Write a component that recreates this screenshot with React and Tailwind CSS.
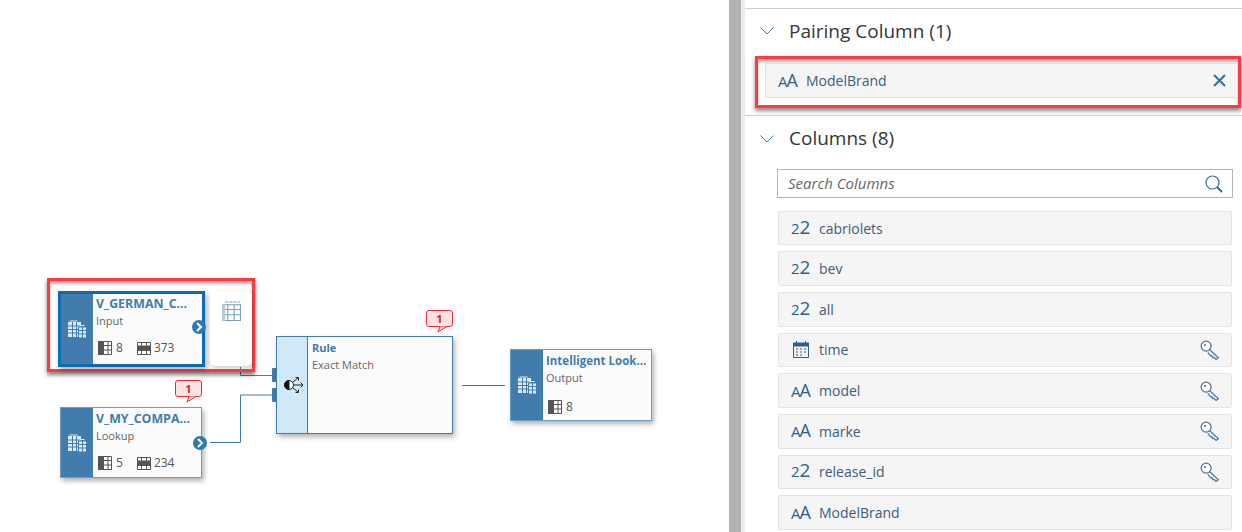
const uiFont = { fontFamily: '"Open Sans", "Noto Sans", sans-serif' };

const columns = [
  { name: 'cabriolets', type: 'num' },
  { name: 'bev', type: 'num' },
  { name: 'all', type: 'num' },
  { name: 'time', type: 'date', isKey: true },
  { name: 'model', type: 'text', isKey: true },
  { name: 'marke', type: 'text', isKey: true },
  { name: 'release_id', type: 'num', isKey: true },
  { name: 'ModelBrand', type: 'text' },
];

// Two buildings, used on the blue strip of each node
const BuildingIcon = () => (
  <svg width="20" height="20" viewBox="0 0 20 20" fill="none" stroke="#427cac" strokeWidth="1">
    <path d="M1 3h13v15H1z" fill="#dfeaf3" stroke="none" />
    <path d="M1 7h13M1 10.5h13M1 14h13M5.5 3v15M9.5 3v15" />
    <path d="M2.5 2h8" stroke="#dfeaf3" />
    <path d="M11.5 8h8v11h-8z" fill="#dfeaf3" />
    <path d="M11.5 11.5h8M11.5 15h8M15.5 8v11" />
    <path d="M12.5 6.5h5" stroke="#dfeaf3" />
  </svg>
);

const ColumnsCountIcon = () => (
  <svg width="14" height="14" viewBox="0 0 14 14" className="shrink-0">
    <path d="M0.5 0.5h13v13h-13z" fill="#fff" stroke="#555" />
    <path d="M0 0h6v14H0z" fill="#555" />
    <path d="M6 4.5h8M6 9h8M10 0v14" stroke="#555" />
  </svg>
);

const RowsCountIcon = () => (
  <svg width="14" height="13" viewBox="0 0 14 13" className="shrink-0">
    <path d="M0.5 0.5h13v12h-13z" fill="#fff" stroke="#555" />
    <path d="M0 3.5h14v5.5H0z" fill="#555" />
    <path d="M4.5 0v3.5M9.5 0v3.5M4.5 9v4M9.5 9v4" stroke="#555" />
  </svg>
);

const ExpandBadge = ({ className }) => (
  <span className={`absolute flex h-[14px] w-[14px] items-center justify-center rounded-full bg-[#2f79b3] ${className}`}>
    <svg width="8" height="10" viewBox="0 0 8 10" fill="none" stroke="#fff" strokeWidth="2">
      <path d="M2 1l4 4-4 4" />
    </svg>
  </span>
);

const Callout = ({ className }) => (
  <div className={`absolute h-[23px] w-[27px] ${className}`}>
    <div className="flex h-[17px] w-full items-center justify-center rounded-[3px] border border-[#ee2b33] bg-[#ffe3e3] text-[11px] leading-none font-bold text-[#d9202a]" style={uiFont}>
      1
    </div>
    <svg width="11" height="7" viewBox="0 0 11 7" className="absolute top-[16px] left-[11px]">
      <path d="M3 0.5L1 6L10 0.5" fill="#ffe3e3" stroke="#ee2b33" />
    </svg>
  </div>
);

const Node = ({ className, title, titleSize, subtitle, cols, rows, selected }) => (
  <div className={`absolute flex bg-[#fbfbfb] shadow-[2px_3px_5px_rgba(0,0,0,0.3)] ${selected ? 'border-[3px] border-[#0a6bb0]' : 'border border-[#6d9cc4]'} ${className}`} style={uiFont}>
    <div className="flex w-[32px] shrink-0 items-center justify-center bg-[#427cac]">
      <BuildingIcon />
    </div>
    <div className={`min-w-0 flex-1 pl-[3px] ${selected ? 'pt-[2px]' : 'pt-[3px]'}`}>
      <div className={`${titleSize} leading-[16px] font-bold whitespace-nowrap text-[#427cac]`}>{title}</div>
      <div className="mt-[1px] text-[11px] leading-[16px] text-[#666]">{subtitle}</div>
      <div className={`flex items-center pl-[2px] text-[12px] leading-[14px] text-[#555] ${rows ? 'mt-[12px]' : 'mt-[14px]'}`}>
        <ColumnsCountIcon />
        <span className="ml-[4px]">{cols}</span>
        {rows && (
          <>
            <span className="ml-[14px]"><RowsCountIcon /></span>
            <span className="ml-[3px]">{rows}</span>
          </>
        )}
      </div>
    </div>
  </div>
);

const Canvas = () => (
  <div className="relative h-[532px] w-[729px] shrink-0 overflow-hidden bg-white">
    {/* connectors */}
    <svg width="729" height="532" className="absolute top-0 left-0" fill="none">
      <path d="M240.5 367v8.5H272" stroke="#427cac" />
      <path d="M210 442.5h30.5v-47.5H272" stroke="#427cac" />
      <path d="M462 385.5h43" stroke="#666" />
    </svg>

    <div className="absolute top-[278px] left-[47px] h-[94px] w-[208px] border-[3px] border-[#ff3b41] shadow-[0_3px_4px_rgba(0,0,0,0.5),inset_0_3px_3px_rgba(0,0,0,0.3)]" />

    <Node className="top-[291px] left-[58px] h-[76px] w-[147px]" title="V_GERMAN_C..." titleSize="text-[12.4px]" subtitle="Input" cols="8" rows="373" selected />
    <ExpandBadge className="top-[320px] left-[192px]" />
    <div className="absolute top-[291px] left-[210px] flex h-[75px] w-[42px] justify-center rounded-[5px] bg-white pt-[10px] shadow-[1px_2px_4px_rgba(0,0,0,0.2)]">
      <svg width="19" height="21" viewBox="0 0 18 20" fill="none" stroke="#7a9cbc">
        <path d="M3 1h14" strokeDasharray="3 1" />
        <path d="M0.5 3.5h17v15h-17z" />
        <path d="M0.5 8h17M0.5 13h17M5.5 3.5v15M11.5 3.5v15" />
        <path d="M0 3h3v16H0z" fill="#b9c9d9" stroke="none" />
      </svg>
    </div>

    <Node className="top-[407px] left-[60px] h-[71px] w-[142px]" title="V_MY_COMPA..." titleSize="text-[12.4px]" subtitle="Lookup" cols="5" rows="234" />
    <ExpandBadge className="top-[436px] left-[193px]" />
    <Callout className="top-[380px] left-[175px]" />

    <div className="absolute top-[368px] left-[272px] h-[14px] w-[5px] rounded-l-[1px] bg-[#427cac]" />
    <div className="absolute top-[388px] left-[272px] h-[14px] w-[5px] rounded-l-[1px] bg-[#427cac]" />
    <div className="absolute top-[336px] left-[276px] flex h-[98px] w-[177px] border border-[#427cac] bg-[#fbfbfb] shadow-[2px_3px_5px_rgba(0,0,0,0.3)]" style={uiFont}>
      <div className="flex w-[31px] shrink-0 items-center justify-center border-r border-[#427cac] bg-[#cfe9f8] pl-[3px]">
        <svg width="22" height="18" viewBox="0 0 22 18" fill="none" stroke="#222">
          <circle cx="6" cy="9" r="4.5" fill="#fff" />
          <path d="M6 4.5a4.5 4.5 0 0 0 0 9z" fill="#111" />
          <path d="M11 9h9M17.5 6.5L20 9l-2.5 2.5M10 6l5-4M12.5 1.5h3v3M10 12l5 4M12.5 16.5h3v-3" />
        </svg>
      </div>
      <div className="pt-[3px] pl-[4px]">
        <div className="text-[11px] leading-[16px] font-bold text-[#427cac]">Rule</div>
        <div className="mt-[1px] text-[11px] leading-[16px] text-[#666]">Exact Match</div>
      </div>
    </div>
    <Callout className="top-[310px] left-[426px]" />

    <Node className="top-[349px] left-[510px] h-[72px] w-[142px]" title="Intelligent Look..." titleSize="text-[11.5px]" subtitle="Output" cols="8" />
  </div>
);

const Chevron = () => (
  <svg width="14" height="8" viewBox="0 0 14 8" fill="none" stroke="#427cac" className="shrink-0">
    <path d="M0.5 0.5L7 7l6.5-6.5" />
  </svg>
);

const TypeIcon = ({ type }) => {
  if (type === 'date') {
    return (
      <svg width="16" height="17" viewBox="0 0 16 17" className="ml-[2px] shrink-0" fill="none" stroke="#2d5f8f">
        <path d="M0.5 2.5h15v14h-15z" />
        <path d="M0 2h16v3H0z" fill="#2d5f8f" />
        <path d="M3.5 0v3M12.5 0v3" />
        <path d="M3 8h2M7 8h2M11 8h2M3 11h2M7 11h2M11 11h2M3 14h2M7 14h2" strokeWidth="1.2" />
      </svg>
    );
  }
  if (type === 'num') {
    return (
      <span className="mt-[-2px] block w-[21px] shrink-0 leading-none whitespace-nowrap text-[#2d5f8f]">
        <span className="text-[15px]">2</span>
        <span className="text-[19px]">2</span>
      </span>
    );
  }
  return (
    <span className="mt-[-2px] block w-[21px] shrink-0 leading-none whitespace-nowrap text-[#2d5f8f]">
      <span className="text-[15px]">A</span>
      <span className="ml-[-1px] text-[18px]">A</span>
    </span>
  );
};

const KeyIcon = () => (
  <svg width="20" height="20" viewBox="0 0 18 18" fill="none" stroke="#55708c" strokeWidth="1.1">
    <circle cx="5.5" cy="5.5" r="4.5" fill="#fff" />
    <circle cx="4.5" cy="4.5" r="1" fill="#427cac" stroke="none" />
    <path d="M8.5 8.5l8 7.5-2 1.5-2-2-1 .5-1-2-1 .2-2.5-3" stroke="#427cac" />
  </svg>
);

const ColumnRow = ({ name, type, isKey }) => (
  <div className="flex h-[34.67px] items-center rounded-[2px] border border-[#e4e4e4] bg-[#f5f5f5] pr-[11px] pl-[12px]">
    <div className="flex w-[28px] shrink-0 items-center"><TypeIcon type={type} /></div>
    <span className="flex-1 text-[14px] text-[#3f5c7c]">{name}</span>
    {isKey && <KeyIcon />}
  </div>
);

const SidePanel = () => (
  <div className="h-[532px] flex-1 overflow-hidden bg-white pt-[8px]" style={uiFont}>
    <div className="h-[107px] border-t border-[#cfcfcf]">
      <div className="flex h-[44px] items-center pl-[15px]">
        <Chevron />
        <span className="ml-[15px] text-[19px] text-[#32363a]">Pairing Column (1)</span>
      </div>
      <div className="relative mt-[3px] ml-[10px] h-[52px] w-[486px] border-[3px] border-[#ff3b41] pt-[4px] pl-[7px] shadow-[0_3px_4px_rgba(0,0,0,0.45),inset_0_3px_3px_rgba(0,0,0,0.3)]">
        <div className="flex h-[35px] items-center border border-[#e0e0e0] bg-[#f5f5f5] pr-[11px] pl-[12px]">
          <div className="w-[28px] shrink-0"><TypeIcon type="text" /></div>
          <span className="flex-1 text-[14px] text-[#3f5c7c]">ModelBrand</span>
          <svg width="13" height="13" viewBox="0 0 13 13" stroke="#2f6ea5" strokeWidth="2">
            <path d="M1 1l11 11M12 1L1 12" />
          </svg>
        </div>
      </div>
    </div>
    <div className="border-t border-[#cfcfcf]">
      <div className="flex h-[45px] items-center pl-[15px]">
        <Chevron />
        <span className="ml-[15px] text-[19px] text-[#32363a]">Columns (8)</span>
      </div>
      <div className="mt-[8px] ml-[32px] flex h-[29px] w-[456px] items-center justify-between border border-[#b5b5b5] pr-[9px] pl-[10px]">
        <span className="text-[15px] text-[#666] italic">Search Columns</span>
        <svg width="18" height="18" viewBox="0 0 18 18" fill="none" stroke="#2f6ea5">
          <circle cx="7.5" cy="7.5" r="6.5" strokeWidth="1.2" />
          <path d="M12 12l5 5" strokeWidth="2" />
        </svg>
      </div>
      <div className="mt-[12.7px] ml-[33px] flex w-[454px] flex-col gap-[6px]">
        {columns.map((column) => (
          <ColumnRow key={column.name} {...column} />
        ))}
      </div>
    </div>
  </div>
);

const App = () => (
  <div className="flex h-[532px] w-[1242px] overflow-hidden bg-white">
    <Canvas />
    <div className="w-[12px] shrink-0 bg-[#b3b3b3]" />
    <div className="w-[4px] shrink-0 bg-[#ececec]" />
    <SidePanel />
  </div>
);

export default App;
